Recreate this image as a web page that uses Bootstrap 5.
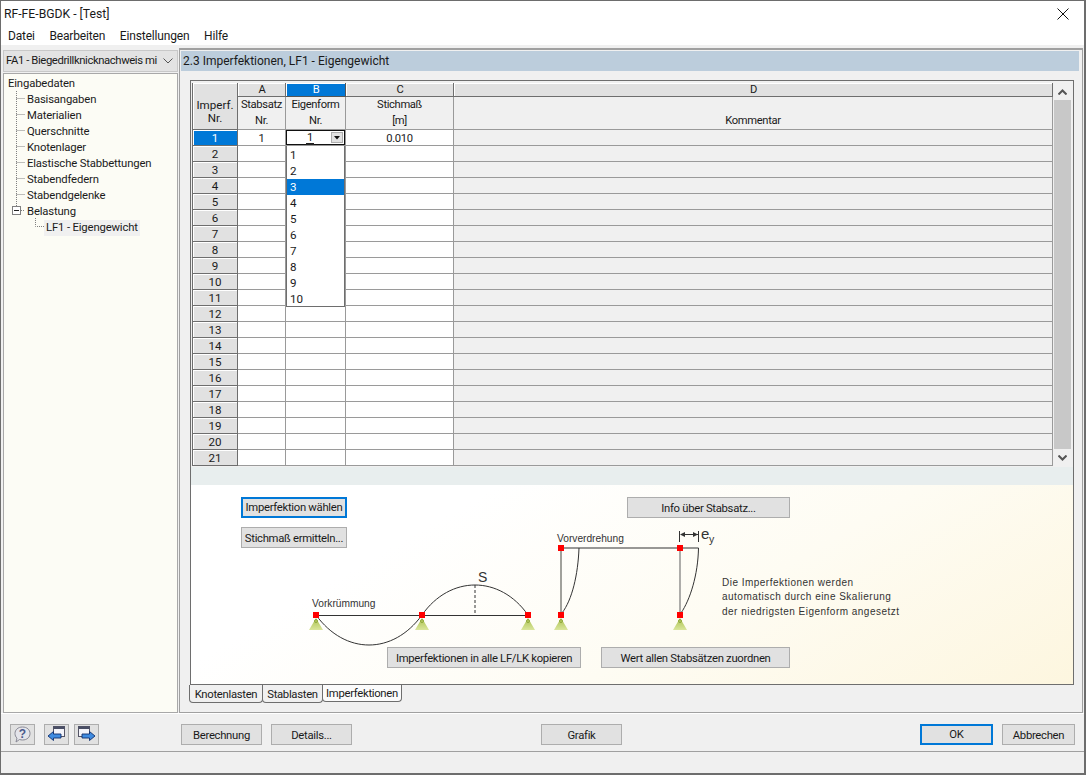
<!DOCTYPE html>
<html lang="de">
<head>
<meta charset="utf-8">
<title>RF-FE-BGDK</title>
<link href="https://cdn.jsdelivr.net/npm/bootstrap@5.3.0/dist/css/bootstrap.min.css" rel="stylesheet">
<style>
html,body{height:100%;overflow:hidden}
body{font-family:Roboto,"Liberation Sans",sans-serif;font-size:12px;color:#1a1a1a;background:#f0f0f0;line-height:16px}
.win{width:1086px;height:775px;border:1px solid #6d6d6d;border-width:1px 2px 2px 1px;display:flex;flex-direction:column;background:#f0f0f0}
.tbar{height:25px;background:#fff;padding:4px 3px 0;font-size:12.2px;line-height:19px}
.xbtn{width:36px;height:25px;margin-top:-4px}
.mbar{height:19px;background:#fff;font-size:12px;letter-spacing:-.15px;line-height:17px;padding:2px 0 0 7px;gap:14.500px}
.work{height:668px;padding:5px 1px 0 2px;gap:1px}
.side{width:175px;gap:1px;flex:none}
.combo{height:22px;background:#e3e3e3;border:1px solid #c8c8c8;padding:0 4px 0 2px;font-size:11.3px;letter-spacing:-.4px;line-height:20px;white-space:nowrap;overflow:hidden}
.combo svg{flex:none}
.tree{flex:1;background:#fcfcf5;border:1px solid #a8a8a8;padding:2px 0 0 4px;position:relative}
.tnode{height:16px;white-space:nowrap;font-size:11.3px;letter-spacing:-.15px;line-height:16px;display:flex;align-items:center}
.tlevel1{padding-left:19px}
.tlevel2{padding-left:37px}
.tsel{background:#f0f0f0;padding:0 2px;margin-left:-1px}
.tlines{position:absolute;left:0;top:0}
.main{flex:none;width:904px;border:1px solid #a0a0a0;border-top-width:2px;display:flex;flex-direction:column;margin-top:-2px}
.phead{height:20px;background:#bccddc;margin:1px 3px 0 1px;padding-left:2px;font-size:12px;line-height:20px}
.frame{margin:9px 0 0 10px;width:884px;height:605px;display:flex;flex-direction:column;border:1px solid #6e6e6e;background:#f0f0f0;position:relative}
.gridw{height:386px;padding:2px 0 0 1px;position:relative;display:flex;background:#f0f0f0;flex:none}
.tb{table-layout:fixed;border-collapse:separate;border-spacing:0;width:861px;font-size:11.2px;letter-spacing:-.35px;height:383px}
.tb td{padding:0;border-right:1px solid #9a9a9a;border-bottom:1px solid #9a9a9a;height:16px;line-height:14px;text-align:center;font-weight:400;vertical-align:middle;overflow:hidden}
.tb td.hl{background:#e1e1e1;border:0;box-shadow:inset -1px -1px 0 #6e6e6e,inset 1px 1px 0 #fff;height:14px;line-height:12px}
.tb td.hl.on{background:#0078d7;color:#fff;box-shadow:inset -1px -1px 0 #555,inset 1px 1px 0 #fff}
.tb td.hsub{background:#f0f0f0;height:33px;vertical-align:top;line-height:16px;padding-top:0}
.tb td.hcorner{background:#e1e1e1;line-height:13px;padding-top:11px}
.tb td.rnum{background:#e1e1e1;border-right:1px solid #6e6e6e;border-bottom:1px solid #6e6e6e;box-shadow:inset 1px 1px 0 #fff;border-left:1px solid #6e6e6e;font-size:11.600px;letter-spacing:0}
.tb td.rnum.on{background:#0078d7;color:#fff}
.tb td.cw{background:#fff;padding-top:1px;line-height:13px}
.cd{background:#f0f0f0}
.tb td.editc{position:relative;overflow:visible;box-shadow:inset 0 0 0 1px #111;background:#fff;vertical-align:top}
.editc u{text-decoration:none;border-bottom:2px solid #222;padding:0 1px;display:block;width:8px;line-height:11px;margin:2px 0 0 20px}
.ddbtn{position:absolute;right:2px;top:2px;width:12px;height:11px;background:#e1e1e1;border:1px solid #adadad;display:flex;align-items:center;justify-content:center}
.tdrop{position:absolute;left:95px;top:65px;width:59px;height:161px;background:#fff;border:1px solid #6e6e6e;border-top:0;z-index:5;padding-top:1px;font-size:11.6px}
.tdrop div{height:16px;line-height:16px;padding-left:3px}
.tdrop .dsel{background:#0078d7;color:#fff}
.sbar{width:17px;height:383px;background:#c8c8c8;margin-left:1px;display:flex;flex-direction:column;justify-content:space-between;flex:none}
.sbtn{height:17px;background:#f0f0f0;display:flex;align-items:center;justify-content:center}
.band{height:18px;background:#e8eeee;flex:none}
.canvas{flex:1;position:relative;background:linear-gradient(150deg,#fff 25%,#fefcf3 60%,#fdf6df 100%)}
.canvas svg{position:absolute;left:0;top:0}
.wbtn{background:#e1e1e1;border:1px solid #adadad;border-radius:0;font-size:11.3px;letter-spacing:-.3px;color:#1a1a1a;padding:2px 0 0;line-height:16px;text-align:center;white-space:nowrap;flex:none}
.wbtn.foc{border:2px solid #0078d7;padding-top:1px}
.cb{position:absolute}
.b1{left:50px;top:12px;width:106px;height:21px}
.b2{left:50px;top:42px;width:106px;height:21px}
.b3{left:436px;top:12px;width:163px;height:21px}
.b4{left:196px;top:162px;width:194px;height:21px}
.b5{left:410px;top:162px;width:189px;height:21px}
.note{position:absolute;left:531px;top:90.500px;font-family:"Liberation Sans",sans-serif;font-size:10px;letter-spacing:.48px;line-height:14.500px;color:#333;white-space:nowrap}
.tabsr{height:19px;padding-left:9px;font-size:11.3px;letter-spacing:-.3px;line-height:16px}
.tabx{height:18px;border:1px solid #6e6e6e;border-top:0;border-radius:0 0 4px 4px;padding-top:2px;background:#f0f0f0;margin-right:-1px;white-space:nowrap;text-align:center;flex:none}
.tx1{width:74px}
.tx2{width:61px}
.tabx.act{background:#fbfbfb;height:17px;padding-top:1px;width:80px}
.foot{height:38px;padding:10px 9px 0 9px;border-top:1px solid #fff}
.ib{width:25px;height:21px;background:#e1e1e1;border:1px solid #adadad;display:flex;align-items:center;justify-content:center;padding:0;flex:none}
.fb{width:81px;height:21px}
.okb{width:73px;height:21px}
.ms9{margin-left:9px}
.ms5{margin-left:5px}
.ms82{margin-left:82px}
.ms189{margin-left:189px}
.ms298{margin-left:298px}
.stat{height:22px;border-top:1px solid #a0a0a0;background:#f0f0f0}
</style>
</head>
<body>
<div class="win">
  <div class="tbar d-flex justify-content-between">
    <span>RF-FE-BGDK - [Test]</span>
    <span class="xbtn d-flex align-items-center justify-content-center"><svg width="12" height="12" viewBox="0 0 12 12"><path d="M.5.5l11 11M11.500.5l-11 11" stroke="#111" fill="none"/></svg></span>
  </div>
  <div class="mbar d-flex"><span>Datei</span><span>Bearbeiten</span><span>Einstellungen</span><span>Hilfe</span></div>
  <div class="work d-flex">
    <div class="side d-flex flex-column">
      <div class="combo d-flex justify-content-between align-items-center"><span>FA1 - Biegedrillknicknachweis mi</span><svg width="10" height="6" viewBox="0 0 10 6"><path d="M.5.5l4.500 4.500 4.500-4.500" stroke="#555" fill="none"/></svg></div>
      <div class="tree">
        <svg class="tlines" width="60" height="170" viewBox="0 0 60 170"><g stroke="#808080" stroke-dasharray="1 1" fill="none"><path d="M12.500 17V133M12.500 24.500H21M12.500 40.500H21M12.500 56.500H21M12.500 72.500H21M12.500 88.500H21M12.500 104.500H21M12.500 120.500H21M17 136.500H21M31.500 144V152.500H40"/></g><rect x="8.500" y="132.500" width="8" height="8" fill="#fff" stroke="#808080"/><path d="M10 136.500h5" stroke="#222"/></svg>
        <div class="tnode">Eingabedaten</div>
        <div class="tnode tlevel1">Basisangaben</div>
        <div class="tnode tlevel1">Materialien</div>
        <div class="tnode tlevel1">Querschnitte</div>
        <div class="tnode tlevel1">Knotenlager</div>
        <div class="tnode tlevel1">Elastische Stabbettungen</div>
        <div class="tnode tlevel1">Stabendfedern</div>
        <div class="tnode tlevel1">Stabendgelenke</div>
        <div class="tnode tlevel1">Belastung</div>
        <div class="tnode tlevel2"><span class="tsel">LF1 - Eigengewicht</span></div>
      </div>
    </div>
    <div class="main">
      <div class="phead">2.3 Imperfektionen, LF1 - Eigengewicht</div>
      <div class="frame">
        <div class="gridw">
          <table class="tb">
            <colgroup><col style="width:46px"><col style="width:48px"><col style="width:60px"><col style="width:108px"><col></colgroup>
            <tr><td class="hcorner rnum" rowspan="2">Imperf.<br>Nr.</td><td class="hl">A</td><td class="hl on">B</td><td class="hl">C</td><td class="hl">D</td></tr>
            <tr><td class="hsub">Stabsatz<br>Nr.</td><td class="hsub">Eigenform<br>Nr.</td><td class="hsub">Stichmaß<br>[m]</td><td class="hsub"><br>Kommentar</td></tr>
            <tr><td class="rnum on">1</td><td class="cw">1</td><td class="editc"><u>1</u><span class="ddbtn"><svg width="6" height="4" viewBox="0 0 6 4"><path d="M0 0h6L3 3.500z" fill="#111"/></svg></span></td><td class="cw">0.010</td><td class="cd"></td></tr>
            <tr><td class="rnum">2</td><td class="cw"></td><td class="cw"></td><td class="cw"></td><td class="cd"></td></tr>
            <tr><td class="rnum">3</td><td class="cw"></td><td class="cw"></td><td class="cw"></td><td class="cd"></td></tr>
            <tr><td class="rnum">4</td><td class="cw"></td><td class="cw"></td><td class="cw"></td><td class="cd"></td></tr>
            <tr><td class="rnum">5</td><td class="cw"></td><td class="cw"></td><td class="cw"></td><td class="cd"></td></tr>
            <tr><td class="rnum">6</td><td class="cw"></td><td class="cw"></td><td class="cw"></td><td class="cd"></td></tr>
            <tr><td class="rnum">7</td><td class="cw"></td><td class="cw"></td><td class="cw"></td><td class="cd"></td></tr>
            <tr><td class="rnum">8</td><td class="cw"></td><td class="cw"></td><td class="cw"></td><td class="cd"></td></tr>
            <tr><td class="rnum">9</td><td class="cw"></td><td class="cw"></td><td class="cw"></td><td class="cd"></td></tr>
            <tr><td class="rnum">10</td><td class="cw"></td><td class="cw"></td><td class="cw"></td><td class="cd"></td></tr>
            <tr><td class="rnum">11</td><td class="cw"></td><td class="cw"></td><td class="cw"></td><td class="cd"></td></tr>
            <tr><td class="rnum">12</td><td class="cw"></td><td class="cw"></td><td class="cw"></td><td class="cd"></td></tr>
            <tr><td class="rnum">13</td><td class="cw"></td><td class="cw"></td><td class="cw"></td><td class="cd"></td></tr>
            <tr><td class="rnum">14</td><td class="cw"></td><td class="cw"></td><td class="cw"></td><td class="cd"></td></tr>
            <tr><td class="rnum">15</td><td class="cw"></td><td class="cw"></td><td class="cw"></td><td class="cd"></td></tr>
            <tr><td class="rnum">16</td><td class="cw"></td><td class="cw"></td><td class="cw"></td><td class="cd"></td></tr>
            <tr><td class="rnum">17</td><td class="cw"></td><td class="cw"></td><td class="cw"></td><td class="cd"></td></tr>
            <tr><td class="rnum">18</td><td class="cw"></td><td class="cw"></td><td class="cw"></td><td class="cd"></td></tr>
            <tr><td class="rnum">19</td><td class="cw"></td><td class="cw"></td><td class="cw"></td><td class="cd"></td></tr>
            <tr><td class="rnum">20</td><td class="cw"></td><td class="cw"></td><td class="cw"></td><td class="cd"></td></tr>
            <tr><td class="rnum">21</td><td class="cw"></td><td class="cw"></td><td class="cw"></td><td class="cd"></td></tr>
          </table>
          <div class="tdrop"><div>1</div><div>2</div><div class="dsel">3</div><div>4</div><div>5</div><div>6</div><div>7</div><div>8</div><div>9</div><div>10</div></div>
          <div class="sbar"><span class="sbtn"><svg width="9" height="6" viewBox="0 0 9 6"><path d="M.5 5.500l4-4 4 4" stroke="#555" stroke-width="2" fill="none"/></svg></span><span class="sbtn"><svg width="9" height="6" viewBox="0 0 9 6"><path d="M.5.500l4 4 4-4" stroke="#555" stroke-width="2" fill="none"/></svg></span></div>
        </div>
        <div class="band"></div>
        <div class="canvas">
          <svg width="882" height="199" viewBox="191 485 882 199">
            <defs><linearGradient id="sup" x1="0" y1="0" x2="0" y2="1"><stop offset="0" stop-color="#a9c04f"/><stop offset="1" stop-color="#dbe69c"/></linearGradient></defs>
            <g fill="none" stroke="#333">
              <path d="M316 615.500H528" stroke-width="1.200"/>
              <path d="M316 615C345 655 393 655 422 615"/>
              <path d="M422 615C450 575 500 575 528 615"/>
              <path d="M475 585V615" stroke-dasharray="3 2"/>
              <path d="M561 548H680" stroke-width="1.200"/>
              <path d="M561 548V615" stroke="#8a8a84" stroke-width="1.600"/>
              <path d="M680 548V615" stroke="#777" stroke-width="1.200"/>
              <path d="M579 548C578 575 572 600 562 613M680 548H698.500C698 575 690 600 681 613"/>
              <path d="M679.500 531V542M698.500 531V542"/>
              <path d="M681 534.500H698"/>
            </g>
            <path d="M680 534.500l5-2.500v5zM698 534.500l-5-2.500v5z" fill="#333"/>
            <g fill="url(#sup)">
              <path d="M316 618l-7 12h14zM422 618l-7 12h14zM528 618l-7 12h14zM561 618l-7 12h14zM680 618l-7 12h14z"/>
            </g>
            <g fill="none" stroke="#8fa83a">
              <circle cx="316" cy="621" r="1.500"/><circle cx="422" cy="621" r="1.500"/><circle cx="528" cy="621" r="1.500"/><circle cx="561" cy="621" r="1.500"/><circle cx="680" cy="621" r="1.500"/>
            </g>
            <g fill="#f00">
              <rect x="313" y="612" width="6" height="6"/><rect x="419" y="612" width="6" height="6"/><rect x="525" y="612" width="6" height="6"/><rect x="558" y="612" width="6" height="6"/><rect x="677" y="612" width="6" height="6"/><rect x="558" y="545" width="6" height="6"/><rect x="677" y="545" width="6" height="6"/>
            </g>
            <g font-family="Liberation Sans" fill="#333">
              <text x="312" y="607" font-size="10.200">Vorkrümmung</text>
              <text x="557" y="542" font-size="10.200">Vorverdrehung</text>
              <text x="478" y="582" font-size="14">S</text>
              <text x="701" y="539" font-size="15">e</text>
              <text x="709" y="543" font-size="10.500">y</text>
            </g>
          </svg>
          <button class="wbtn foc cb b1" type="button">Imperfektion wählen</button>
          <button class="wbtn cb b2" type="button">Stichmaß ermitteln...</button>
          <button class="wbtn cb b3" type="button">Info über Stabsatz...</button>
          <button class="wbtn cb b4" type="button">Imperfektionen in alle LF/LK kopieren</button>
          <button class="wbtn cb b5" type="button">Wert allen Stabsätzen zuordnen</button>
          <div class="note">Die Imperfektionen werden<br>automatisch durch eine Skalierung<br>der niedrigsten Eigenform angesetzt</div>
        </div>
      </div>
      <div class="tabsr d-flex align-items-start">
        <span class="tabx tx1">Knotenlasten</span><span class="tabx tx2">Stablasten</span><span class="tabx act">Imperfektionen</span>
      </div>
    </div>
  </div>
  <div class="foot d-flex align-items-start">
    <button class="ib" type="button" aria-label="Hilfe"><svg width="19" height="17" viewBox="0 0 19 17"><path d="M9.500 1C14 1 17 3.800 17 7.500S14 14 9.500 14c-1 0-2-.2-3-.5L3 16l1-4C2.700 11 2 9.300 2 7.500 2 3.800 5 1 9.500 1z" fill="#e4e4ea" stroke="#8a8a96"/><text x="9.500" y="12" text-anchor="middle" font-size="12" font-weight="700" font-family="Liberation Sans" fill="#4a5a8c">?</text></svg></button>
    <button class="ib ms9" type="button" aria-label="Zurück"><svg width="19" height="17" viewBox="0 0 19 17"><rect x="6.500" y=".5" width="11" height="10" fill="#f4f4fa" stroke="#556"/><rect x="6.500" y=".5" width="11" height="2.500" fill="#4a4f66"/><path d="M1 10l5.500-4.500V8H14v4H6.500v2.500z" fill="#3f8be0" stroke="#12306e" stroke-width=".9"/></svg></button>
    <button class="ib ms5" type="button" aria-label="Weiter"><svg width="19" height="17" viewBox="0 0 19 17"><rect x="1.500" y=".5" width="11" height="10" fill="#f4f4fa" stroke="#556"/><rect x="1.500" y=".5" width="11" height="2.500" fill="#4a4f66"/><path d="M18 10l-5.500-4.500V8H5v4h7.500v2.500z" fill="#3f8be0" stroke="#12306e" stroke-width=".9"/></svg></button>
    <button class="wbtn fb ms82" type="button">Berechnung</button>
    <button class="wbtn fb ms9" type="button">Details...</button>
    <button class="wbtn fb ms189" type="button">Grafik</button>
    <button class="wbtn foc okb ms298" type="button">OK</button>
    <button class="wbtn okb ms9" type="button">Abbrechen</button>
  </div>
  <div class="stat"></div>
</div>
</body>
</html>
